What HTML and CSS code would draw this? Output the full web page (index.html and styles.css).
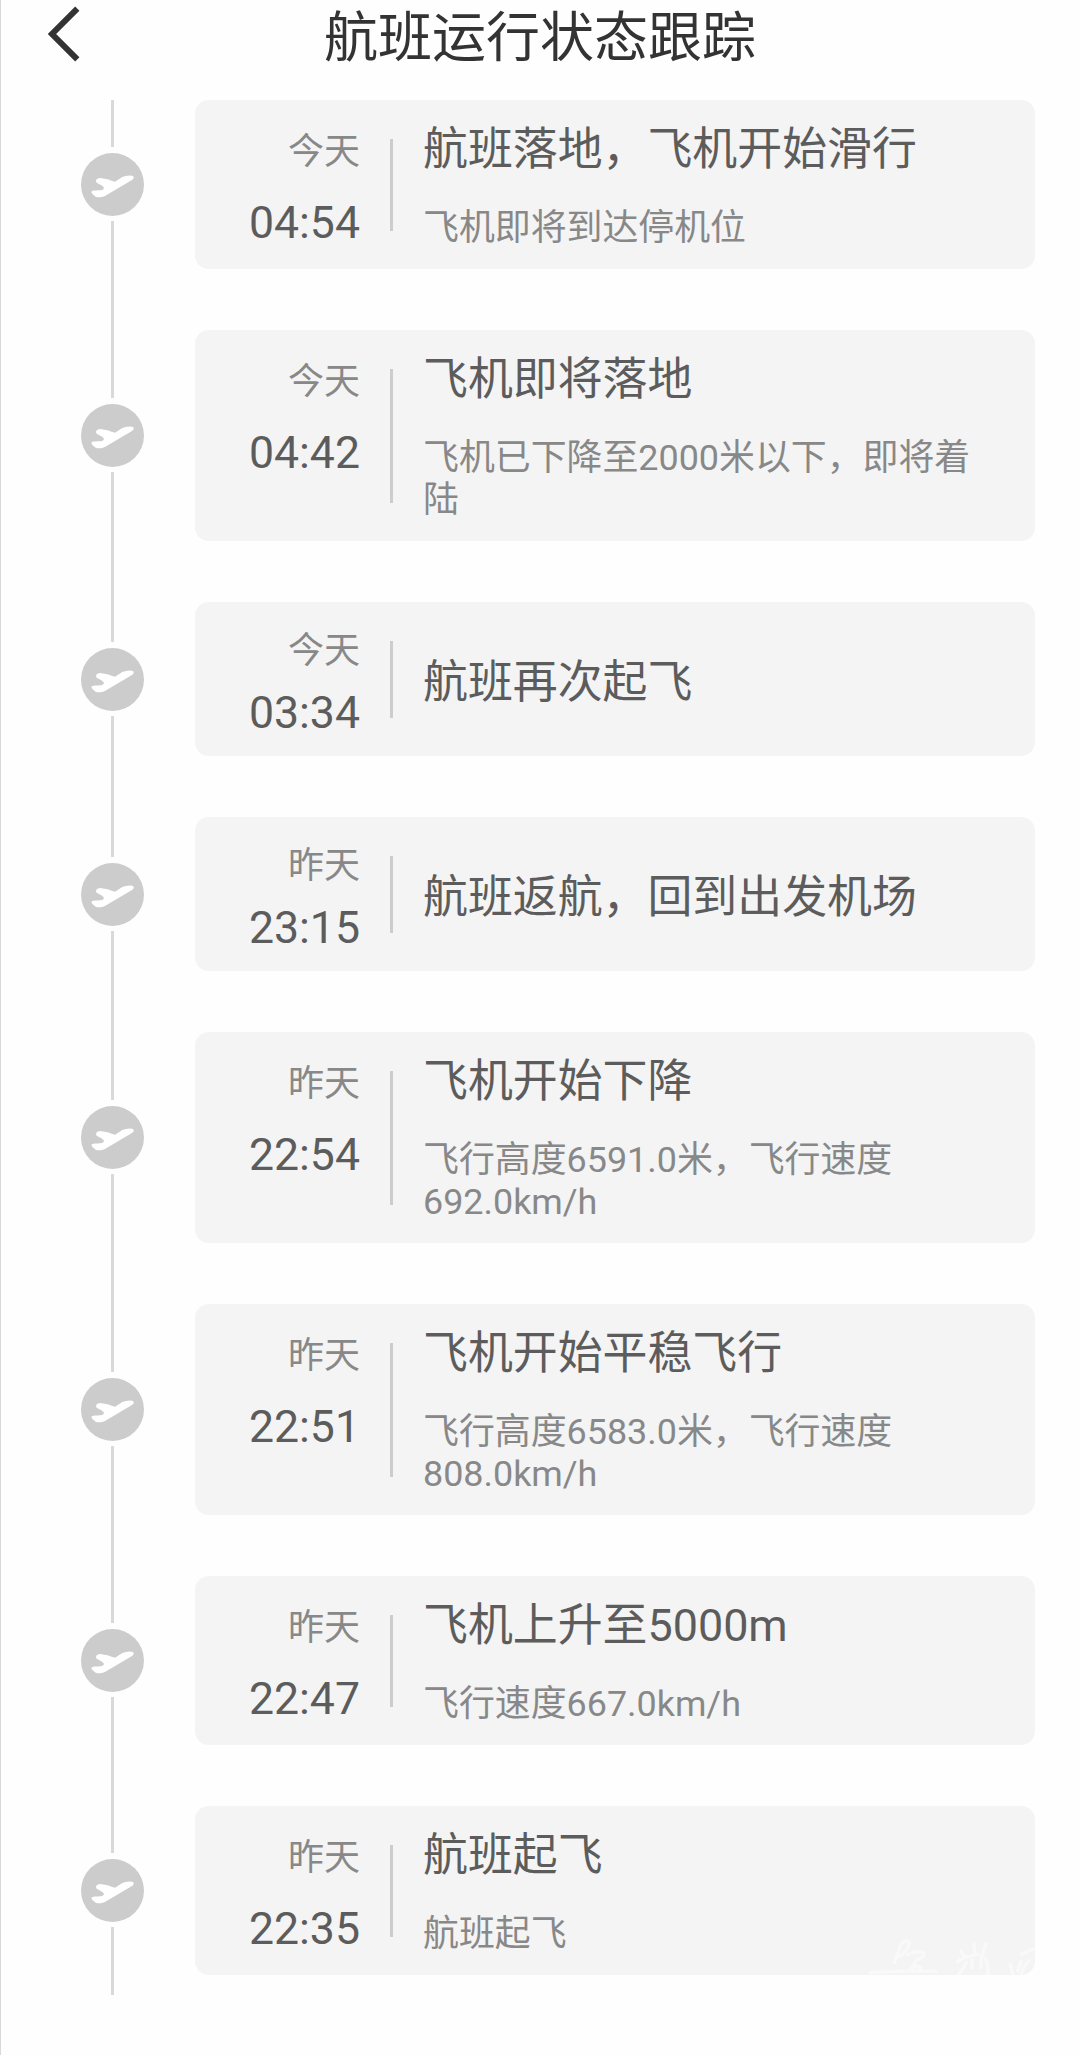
FILE: index.html
```html
<!DOCTYPE html>
<html lang="zh-CN">
<head>
<meta charset="utf-8">
<title>航班运行状态跟踪</title>
<link rel="stylesheet" href="styles.css">
</head>
<body>
<svg class="defs" width="0" height="0" aria-hidden="true">
  <symbol id="plane" viewBox="34 38 189 189">
    <path d="M66 153C72 149 86 151 95 150Q103 147 103 143Q101 139 95 135L81 127C76 120 82 114 91 113L114 117Q126 123 136 124L158 110Q172 104 187 106C195 108 193 114 187 119L112 163C98 173 84 172 78 169Q63 160 66 153Z" fill="#fff"/>
  </symbol>
</svg>
<div class="page">
  <header class="header">
    <svg class="back" viewBox="0 0 36 60"><path d="M33.3 5.7L8 31L33.3 56.3" fill="none" stroke="#333" stroke-width="6"/></svg>
    <h1 class="heading">航班运行状态跟踪</h1>
  </header>
  <main class="timeline">
    <section class="row">
      <div class="rail"><span class="dot"><svg><use href="#plane"/></svg></span></div>
      <article class="card">
        <div class="when"><span class="date">今天</span><time class="time">04:54</time></div>
        <div class="what"><h2 class="title">航班落地，飞机开始滑行</h2><p class="desc">飞机即将到达停机位</p></div>
      </article>
    </section>
    <section class="row">
      <div class="rail"><span class="dot"><svg><use href="#plane"/></svg></span></div>
      <article class="card">
        <div class="when"><span class="date">今天</span><time class="time">04:42</time></div>
        <div class="what"><h2 class="title">飞机即将落地</h2><p class="desc">飞机已下降至2000米以下，即将着陆</p></div>
      </article>
    </section>
    <section class="row">
      <div class="rail"><span class="dot"><svg><use href="#plane"/></svg></span></div>
      <article class="card compact">
        <div class="when"><span class="date">今天</span><time class="time">03:34</time></div>
        <div class="what"><h2 class="title">航班再次起飞</h2></div>
      </article>
    </section>
    <section class="row">
      <div class="rail"><span class="dot"><svg><use href="#plane"/></svg></span></div>
      <article class="card compact">
        <div class="when"><span class="date">昨天</span><time class="time">23:15</time></div>
        <div class="what"><h2 class="title">航班返航，回到出发机场</h2></div>
      </article>
    </section>
    <section class="row">
      <div class="rail"><span class="dot"><svg><use href="#plane"/></svg></span></div>
      <article class="card">
        <div class="when"><span class="date">昨天</span><time class="time">22:54</time></div>
        <div class="what"><h2 class="title">飞机开始下降</h2><p class="desc">飞行高度6591.0米，飞行速度692.0km/h</p></div>
      </article>
    </section>
    <section class="row">
      <div class="rail"><span class="dot"><svg><use href="#plane"/></svg></span></div>
      <article class="card">
        <div class="when"><span class="date">昨天</span><time class="time">22:51</time></div>
        <div class="what"><h2 class="title">飞机开始平稳飞行</h2><p class="desc">飞行高度6583.0米，飞行速度808.0km/h</p></div>
      </article>
    </section>
    <section class="row">
      <div class="rail"><span class="dot"><svg><use href="#plane"/></svg></span></div>
      <article class="card">
        <div class="when"><span class="date">昨天</span><time class="time">22:47</time></div>
        <div class="what"><h2 class="title">飞机上升至5000m</h2><p class="desc">飞行速度667.0km/h</p></div>
      </article>
    </section>
    <section class="row">
      <div class="rail"><span class="dot"><svg><use href="#plane"/></svg></span></div>
      <article class="card">
        <div class="when"><span class="date">昨天</span><time class="time">22:35</time></div>
        <div class="what"><h2 class="title">航班起飞</h2><p class="desc">航班起飞</p></div>
        <svg class="watermark" viewBox="145 110 500 117" aria-hidden="true">
          <g fill="none" stroke="#f9f9f9" stroke-width="10" stroke-linecap="round" stroke-linejoin="round">
            <path d="M224 190L244 134Q256 118 268 130Q266 152 240 172M264 166Q290 150 312 162Q314 176 290 182L270 212Q290 194 304 204L290 214M150 220Q250 214 350 216"/>
            <path d="M424 155L434 172M462 134L466 165M498 134L488 168M412 188Q440 168 474 166M440 190L418 224M458 180L456 205M484 170L484 205M496 178Q508 200 504 224"/>
            <path d="M606 164L642 148M572 196L578 222M604 186L594 214M628 184Q612 200 604 222"/>
          </g>
        </svg>
      </article>
    </section>
  </main>
</div>
</body>
</html>
```
FILE: styles.css
```css
* { box-sizing: border-box; }

body {
  margin: 0;
  background: #fefefe;
  font-family: Roboto, "Noto Sans CJK SC", sans-serif;
}

.defs { display: block; }

.page {
  min-height: 2055px;
  border-left: 1px solid #d9d9d9;
}

.header {
  display: grid;
  grid-template-columns: 150px 1fr 151px;
  height: 100px;
  align-items: start;
}

.back {
  width: 36px;
  height: 60px;
  margin: 3px 0 0 43px;
}

.heading {
  margin: 0;
  padding-top: 7px;
  font-size: 54px;
  line-height: 64px;
  font-weight: 400;
  text-align: center;
  color: #333;
}

.timeline {
  --gap: 61px;
  padding-right: 45px;
}

.row {
  display: grid;
  grid-template-columns: 194px 1fr;
}

/* line, dot, line, then the stretch down to the next card */
.rail {
  display: flex;
  flex-direction: column;
  align-items: center;
  width: 63px;
  margin-left: 80px;
}

.rail::before,
.rail::after {
  content: "";
  width: 3px;
  flex: 1 1 0;
  background: #d9d9d9;
}

.rail::after { flex-basis: calc(var(--gap) + 1px); }

.row:last-child { --gap: 20px; }

.dot {
  width: 63px;
  height: 63px;
  margin: 6px 0 5px;
  border-radius: 50%;
  background: #ccc;
}

.dot svg {
  display: block;
  width: 63px;
  height: 63px;
}

.card {
  position: relative;
  display: flex;
  margin-bottom: var(--gap);
  border-radius: 14px;
  background: #f4f4f4;
}

.when {
  display: flex;
  flex-direction: column;
  gap: 24px;
  width: 165px;
  padding-top: 31px;
  text-align: right;
}

.date {
  font-size: 36px;
  line-height: 42px;
  color: #888;
}

.time {
  font-size: 44.6px;
  line-height: 52px;
  color: #5c5c5c;
}

.what {
  display: flex;
  flex: 1;
  flex-direction: column;
  gap: 30px;
  padding: 23px 36px 20px 0;
}

.card::before {
  content: "";
  order: 1;
  width: 3px;
  margin: 39px 30px 38px;
  background: #ccc;
}

.what { order: 2; }

.title {
  margin: 0;
  font-size: 44.9px;
  line-height: 54px;
  font-weight: 400;
  color: #5c5c5c;
}

.desc {
  margin: 0;
  font-size: 35.9px;
  line-height: 42px;
  color: #888;
}

.compact .when {
  gap: 15px;
  padding: 28px 0 17px;
}

.compact .what {
  justify-content: center;
  padding: 8px 36px 0 0;
}

.watermark {
  position: absolute;
  right: 0;
  bottom: 0;
  width: 167px;
  height: 39px;
}
```
